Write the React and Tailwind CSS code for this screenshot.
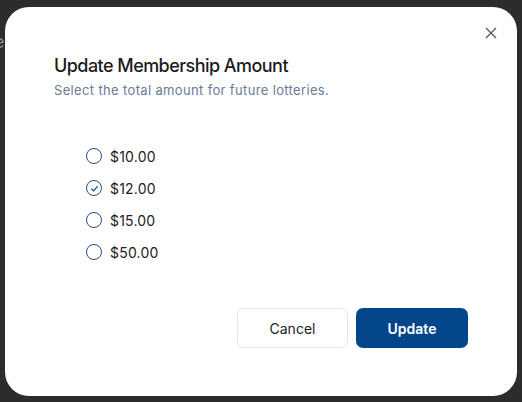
import React, { useState } from "react";

const amounts = ["$10.00", "$12.00", "$15.00", "$50.00"];

const App = () => {
  const [selected, setSelected] = useState("$12.00");

  return (
    <div
      className="relative w-[522px] h-[402px] bg-[#2c2c2c] overflow-hidden"
      style={{ fontFamily: "Inter, 'Noto Sans', sans-serif" }}
    >
      {/* page text peeking behind the modal */}
      <span className="absolute left-[-6px] top-[28px] text-[18px] text-[#8a8a8a]">e</span>

      <div className="absolute left-[5px] top-[7px] w-[512px] h-[389px] bg-white rounded-[24px] px-[49px] pt-[46px]">
        <button className="absolute right-[16px] top-[16px] flex items-center justify-center text-[#555] p-1">
          <svg width="12" height="12" viewBox="0 0 12 12" fill="none" stroke="currentColor" strokeWidth="1.3">
            <path d="M1 1 L11 11 M11 1 L1 11" />
          </svg>
        </button>

        <h2 className="text-[18px] font-medium text-[#1c1c1c] leading-[26px] tracking-[-0.55px]">
          Update Membership Amount
        </h2>
        <p className="text-[13px] text-[#6b7a99] leading-[20px] mt-[1px] tracking-[0.35px]">
          Select the total amount for future lotteries.
        </p>

        {/* Options */}
        <div className="flex flex-col gap-[12px] mt-[46px] pl-[32px]">
          {amounts.map((amt) => (
            <label
              key={amt}
              className="flex items-center gap-[8px] h-[20px] cursor-pointer"
              onClick={() => setSelected(amt)}
            >
              <span className="w-[16px] h-[16px] rounded-full border-[1.5px] border-[#1f4f8f] flex items-center justify-center">
                {selected === amt && (
                  <svg width="9" height="9" viewBox="0 0 10 10" fill="none" stroke="#1f4f8f" strokeWidth="1.4">
                    <path d="M1.5 5.2 L4 7.6 L8.6 2.4" />
                  </svg>
                )}
              </span>
              <span className="text-[14px] text-[#222] tracking-[0.2px]">{amt}</span>
            </label>
          ))}
        </div>

        {/* Actions */}
        <div className="flex justify-end gap-[8px] mt-[46px]">
          <button className="w-[111px] h-[40px] rounded-[7px] border border-[#e3e6ee] bg-white text-[14px] text-[#222]">
            Cancel
          </button>
          <button className="w-[112px] h-[40px] rounded-[7px] bg-[#01458a] text-[14px] font-semibold text-white">
            Update
          </button>
        </div>
      </div>
    </div>
  );
};

export default App;
